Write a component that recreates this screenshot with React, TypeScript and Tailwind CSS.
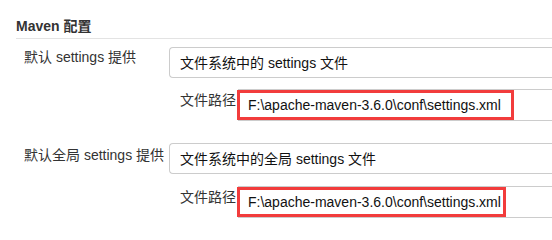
import React from 'react';

interface SettingsRowProps {
  label: string;
  option: string;
  path: string;
  labelPad: string;
  rowTop: string;
  pathTop: string;
  markWidth: string;
}

function SettingsRow({ label, option, path, labelPad, rowTop, pathTop, markWidth }: SettingsRowProps) {
  return (
    <div className={`flex items-start ${rowTop}`}>
      {/* label column */}
      <div className={`w-[169px] shrink-0 pl-6 text-[14px] leading-5 text-[#333] ${labelPad}`}>{label}</div>

      {/* fields column */}
      <div className="flex flex-col shrink-0 w-[420px]">
        <div className="h-[31px] border border-[#ccc] rounded-l-[4px] border-r-0 pl-[10px] pt-[1px] flex items-center text-[14px] text-[#111]">
          {option}
        </div>
        <div className={`flex items-start ${pathTop}`}>
          <div className="w-[69px] shrink-0 pl-[11px] pt-[1px] text-[14px] leading-5 text-[#333]">文件路径</div>
          <div className="relative flex-1 h-[32px] border border-[#ccc] border-r-0 pl-[9px] flex items-center text-[14px] text-[#111]">
            {path}
            {/* red annotation frame */}
            <div className={`absolute -left-[2px] top-0 h-[30px] border-[3px] border-[#f23c3c] ${markWidth}`} />
          </div>
        </div>
      </div>
    </div>
  );
}

export default function App() {
  return (
    <div className="w-[552px] h-[240px] overflow-hidden bg-white" style={{ fontFamily: '"Liberation Sans", Arial, "Noto Sans CJK SC", sans-serif' }}>
      <div className="ml-4 pt-4 pb-[2px] border-b border-[#e3e3e3] text-[14px] leading-5 font-bold text-[#333]">
        Maven 配置
      </div>

      <SettingsRow
        label="默认 settings 提供"
        option="文件系统中的 settings 文件"
        path="F:\apache-maven-3.6.0\conf\settings.xml"
        labelPad="pt-0"
        rowTop="mt-2"
        pathTop="mt-[11px]"
        markWidth="w-[277px]"
      />

      <SettingsRow
        label="默认全局 settings 提供"
        option="文件系统中的全局 settings 文件"
        path="F:\apache-maven-3.6.0\conf\settings.xml"
        labelPad="pt-[2px]"
        rowTop="mt-[22px]"
        pathTop="mt-[12px]"
        markWidth="w-[269px]"
      />
    </div>
  );
}
